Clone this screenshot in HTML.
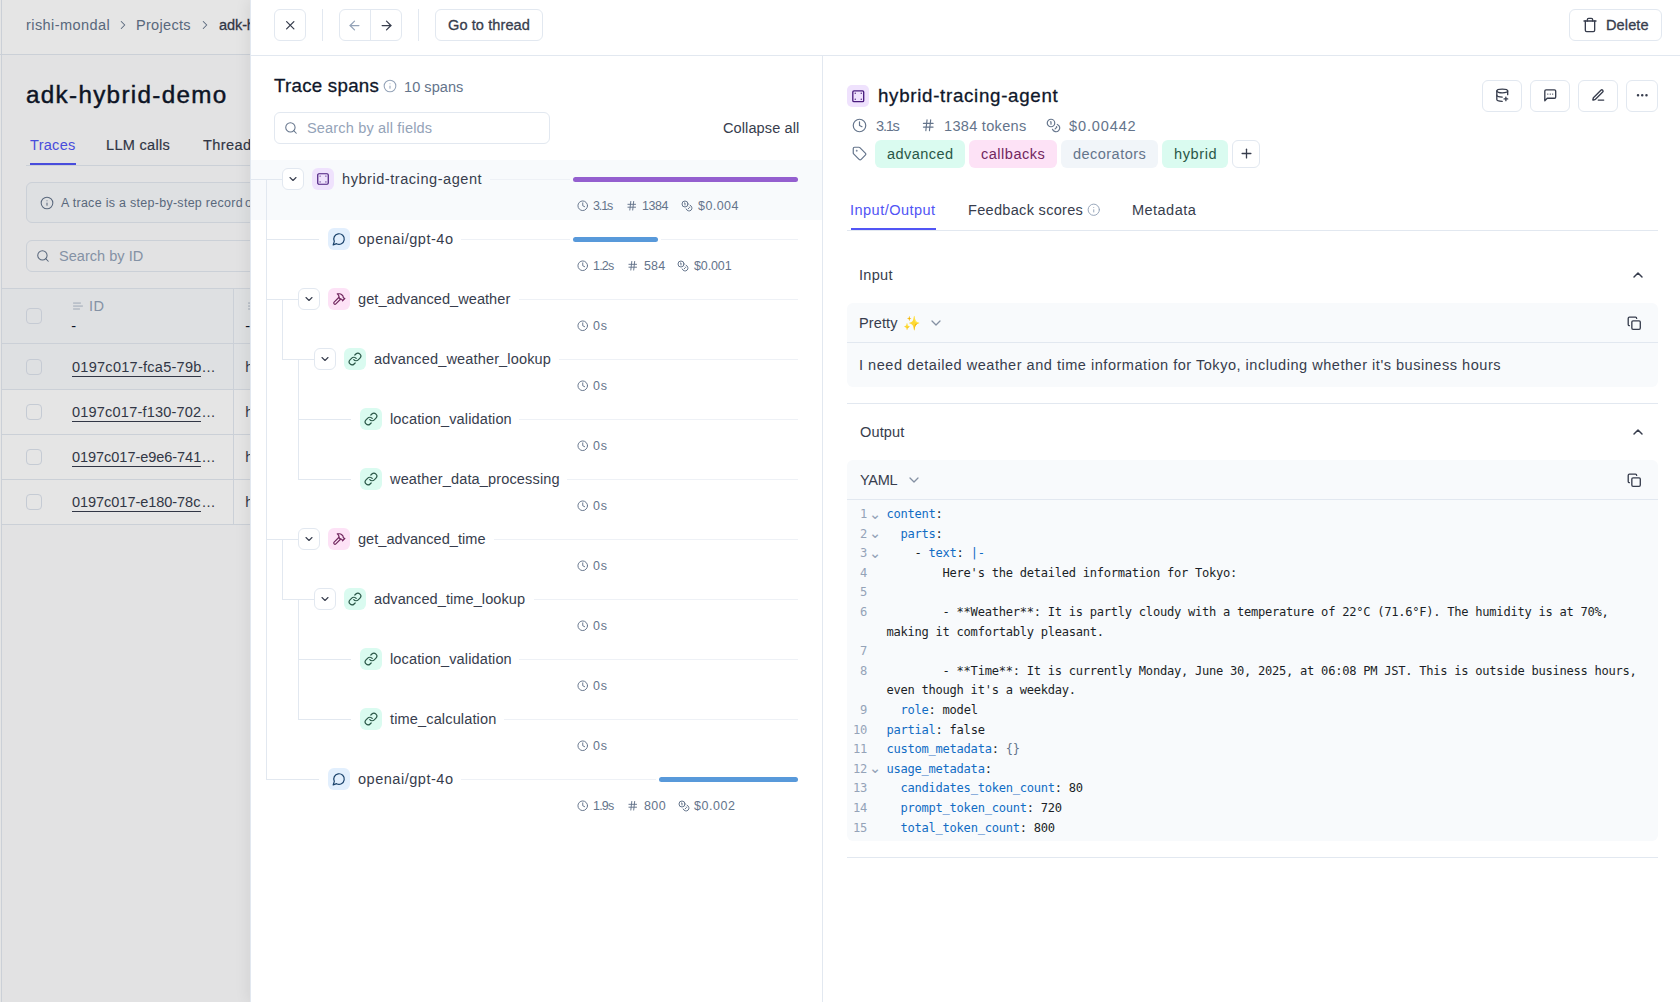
<!DOCTYPE html>
<html lang="en"><head><meta charset="utf-8"><title>adk-hybrid-demo - Trace spans</title>
<style>
html,body{margin:0;padding:0;}
body{width:1680px;height:1002px;overflow:hidden;position:relative;background:#fff;font-family:"Liberation Sans",sans-serif;-webkit-font-smoothing:antialiased;}
.b{position:absolute;}
.ic{position:absolute;display:block;}
.t{position:absolute;white-space:pre;display:block;}
.emoji{font-family:"Noto Color Emoji","DejaVu Sans",sans-serif;}
#page{position:absolute;left:0;top:0;width:250px;height:1002px;overflow:hidden;background:#fcfcfd;}
#overlay{position:absolute;left:0;top:0;width:250px;height:1002px;background:rgba(0,0,0,0.1);}
#panel{position:absolute;left:250px;top:0;width:1430px;height:1002px;background:#fff;border-left:1px solid #e2e8f0;box-sizing:border-box;box-shadow:-2px 0 14px rgba(0,0,0,0.07);}
#code{position:absolute;left:847px;top:0;width:811px;height:0;font-family:"DejaVu Sans Mono","Liberation Mono",monospace;font-size:12.1px;letter-spacing:-0.271px;color:#1b1f27;}
.cl{position:absolute;left:0;height:19.6px;line-height:19.6px;white-space:pre;width:811px;}
.ln{position:absolute;left:0;width:20px;text-align:right;color:#94a3b8;}
.fold{position:absolute;left:22px;color:#94a3b8;font-family:"DejaVu Sans",sans-serif;font-size:14.5px;top:-0.5px;letter-spacing:0;}
.cc{position:absolute;left:39.5px;}
</style></head>
<body>
<div id="page">
<div class="b" style="left:0px;top:0px;width:260px;height:54px;background:#fff;"></div>
<div class="b" style="left:0px;top:0px;width:1px;height:1002px;background:#fff;border-right:1px solid #e2e8f0;"></div>
<div class="b" style="left:0px;top:54px;width:260px;height:1px;background:#e2e8f0;"></div>
<span id="t1" class="t " style="left:26.00px;top:17px;font-size:14.56px;line-height:16px;color:#64748b;letter-spacing:0.409px;">rishi-mondal</span>
<svg class="ic" style="left:116px;top:18px;color:#64748b" width="14" height="14" viewBox="0 0 24 24" fill="none" stroke="currentColor" stroke-width="1.8" stroke-linecap="round" stroke-linejoin="round"><path d="m9 18 6-6-6-6"/></svg>
<span id="t2" class="t " style="left:136.00px;top:17px;font-size:14.56px;line-height:16px;color:#64748b;letter-spacing:0.286px;">Projects</span>
<svg class="ic" style="left:198px;top:18px;color:#64748b" width="14" height="14" viewBox="0 0 24 24" fill="none" stroke="currentColor" stroke-width="1.8" stroke-linecap="round" stroke-linejoin="round"><path d="m9 18 6-6-6-6"/></svg>
<span id="t3" class="t " style="left:219.00px;top:17px;font-size:14.56px;line-height:16px;-webkit-text-stroke:0.3px currentColor;color:#373d4d;letter-spacing:-0.107px;">adk-hybrid-demo</span>
<span id="t4" class="t " style="left:26.00px;top:81px;font-size:24.23px;line-height:27px;-webkit-text-stroke:0.3px currentColor;color:#0f172a;letter-spacing:1.321px;-webkit-text-stroke:0.45px currentColor;">adk-hybrid-demo</span>
<span id="t5" class="t " style="left:30.00px;top:137px;font-size:14.56px;line-height:16px;color:#5155f5;letter-spacing:0.280px;">Traces</span>
<span id="t6" class="t " style="left:106.00px;top:137px;font-size:14.56px;line-height:16px;color:#373d4d;letter-spacing:0.300px;-webkit-text-stroke:0.18px currentColor;">LLM calls</span>
<span id="t7" class="t " style="left:203.00px;top:137px;font-size:14.56px;line-height:16px;color:#373d4d;letter-spacing:0.417px;-webkit-text-stroke:0.18px currentColor;">Threads</span>
<div class="b" style="left:26px;top:165px;width:240px;height:1px;background:#e2e8f0;"></div>
<div class="b" style="left:30px;top:163px;width:46px;height:2px;background:#5155f5;"></div>
<div class="b" style="left:26px;top:182px;width:300px;height:41px;border:1px solid #e2e8f0;border-radius:6px;background:#f8fafc;box-sizing:border-box;"></div>
<svg class="ic" style="left:39.5px;top:196px;color:#64748b" width="14" height="14" viewBox="0 0 24 24" fill="none" stroke="currentColor" stroke-width="1.8" stroke-linecap="round" stroke-linejoin="round"><circle cx="12" cy="12" r="10"/><path d="M12 16v-4"/><path d="M12 8h.01"/></svg>
<span id="t8" class="t " style="left:61.00px;top:196px;font-size:12.48px;line-height:14px;color:#64748b;letter-spacing:0.294px;">A trace is a step-by-step record</span>
<span id="t9" class="t " style="left:244.98px;top:196px;font-size:12.48px;line-height:14px;color:#64748b;">of your LLM application</span>
<div class="b" style="left:26px;top:240px;width:300px;height:32px;border:1px solid #e2e8f0;border-radius:6px;box-sizing:border-box;"></div>
<svg class="ic" style="left:36px;top:249px;color:#64748b" width="14" height="14" viewBox="0 0 24 24" fill="none" stroke="currentColor" stroke-width="1.8" stroke-linecap="round" stroke-linejoin="round"><circle cx="11" cy="11" r="8"/><path d="m21 21-4.3-4.3"/></svg>
<span id="t10" class="t " style="left:59.00px;top:248px;font-size:14.56px;line-height:16px;color:#94a3b8;letter-spacing:0.018px;">Search by ID</span>
<div class="b" style="left:2px;top:288px;width:260px;height:56px;background:#f8fafc;border-top:1px solid #e2e8f0;border-bottom:1px solid #e2e8f0;box-sizing:border-box;"></div>
<div class="b" style="left:2px;top:344px;width:260px;height:45px;background:#f8fafc;"></div>
<div class="b" style="left:2px;top:390px;width:260px;height:134px;background:#fff;"></div>
<div class="b" style="left:2px;top:389px;width:260px;height:1px;background:#e2e8f0;"></div>
<div class="b" style="left:2px;top:434px;width:260px;height:1px;background:#e2e8f0;"></div>
<div class="b" style="left:2px;top:479px;width:260px;height:1px;background:#e2e8f0;"></div>
<div class="b" style="left:2px;top:524px;width:260px;height:1px;background:#e2e8f0;"></div>
<div class="b" style="left:233px;top:289px;width:1px;height:235px;background:#e2e8f0;"></div>
<div class="b" style="left:26px;top:308px;width:16px;height:16px;border:1px solid #dce2ec;border-radius:4px;box-sizing:border-box;"></div>
<svg class="ic" style="left:72px;top:300px;color:#a9b5c6" width="12" height="12" viewBox="0 0 24 24" fill="none" stroke="currentColor" stroke-width="1.8" stroke-linecap="round" stroke-linejoin="round"><path d="M17 6.100H3"/><path d="M21 12.100H3"/><path d="M15.100 18H3"/></svg>
<span id="t11" class="t " style="left:89.00px;top:298px;font-size:14.56px;line-height:16px;color:#94a3b8;letter-spacing:0.500px;">ID</span>
<span id="t12" class="t " style="left:71.27px;top:318px;font-size:14.56px;line-height:16px;color:#0f172a;">-</span>
<svg class="ic" style="left:247px;top:300px;color:#a9b5c6" width="12" height="12" viewBox="0 0 24 24" fill="none" stroke="currentColor" stroke-width="1.8" stroke-linecap="round" stroke-linejoin="round"><path d="M17 6.100H3"/><path d="M21 12.100H3"/><path d="M15.100 18H3"/></svg>
<span id="t13" class="t " style="left:245.27px;top:318px;font-size:14.56px;line-height:16px;color:#0f172a;">-</span>
<div class="b" style="left:26px;top:359px;width:16px;height:16px;border:1px solid #dce2ec;border-radius:4px;box-sizing:border-box;"></div>
<span id="t14" class="t " style="left:72.00px;top:359px;font-size:14.56px;line-height:16px;color:#373d4d;letter-spacing:0.250px;">0197c017-fca5-79b</span>
<div class="b" style="left:72px;top:376px;width:128.6px;height:1px;background:#373d4d;"></div>
<span id="t15" class="t " style="left:202.00px;top:359px;font-size:14.56px;line-height:16px;color:#373d4d;letter-spacing:0.500px;">...</span>
<span id="t16" class="t " style="left:245.27px;top:359px;font-size:14.56px;line-height:16px;color:#373d4d;">hybrid-tracing-agent</span>
<div class="b" style="left:26px;top:404px;width:16px;height:16px;border:1px solid #dce2ec;border-radius:4px;box-sizing:border-box;"></div>
<span id="t17" class="t " style="left:72.00px;top:404px;font-size:14.56px;line-height:16px;color:#373d4d;letter-spacing:0.188px;">0197c017-f130-702</span>
<div class="b" style="left:72px;top:421px;width:128.6px;height:1px;background:#373d4d;"></div>
<span id="t18" class="t " style="left:202.00px;top:404px;font-size:14.56px;line-height:16px;color:#373d4d;letter-spacing:0.500px;">...</span>
<span id="t19" class="t " style="left:245.27px;top:404px;font-size:14.56px;line-height:16px;color:#373d4d;">hybrid-tracing-agent</span>
<div class="b" style="left:26px;top:449px;width:16px;height:16px;border:1px solid #dce2ec;border-radius:4px;box-sizing:border-box;"></div>
<span id="t20" class="t " style="left:72.00px;top:449px;font-size:14.56px;line-height:16px;color:#373d4d;letter-spacing:-0.062px;">0197c017-e9e6-741</span>
<div class="b" style="left:72px;top:466px;width:128.6px;height:1px;background:#373d4d;"></div>
<span id="t21" class="t " style="left:202.00px;top:449px;font-size:14.56px;line-height:16px;color:#373d4d;letter-spacing:0.500px;">...</span>
<span id="t22" class="t " style="left:245.27px;top:449px;font-size:14.56px;line-height:16px;color:#373d4d;">hybrid-tracing-agent</span>
<div class="b" style="left:26px;top:494px;width:16px;height:16px;border:1px solid #dce2ec;border-radius:4px;box-sizing:border-box;"></div>
<span id="t23" class="t " style="left:72.00px;top:494px;font-size:14.56px;line-height:16px;color:#373d4d;letter-spacing:-0.062px;">0197c017-e180-78c</span>
<div class="b" style="left:72px;top:511px;width:128.6px;height:1px;background:#373d4d;"></div>
<span id="t24" class="t " style="left:202.00px;top:494px;font-size:14.56px;line-height:16px;color:#373d4d;letter-spacing:0.500px;">...</span>
<span id="t25" class="t " style="left:245.27px;top:494px;font-size:14.56px;line-height:16px;color:#373d4d;">hybrid-tracing-agent</span>
</div>
<div id="overlay"></div>
<div id="panel">
</div>
<div class="b" style="left:251px;top:55px;width:1429px;height:1px;background:#e2e8f0;"></div>
<div class="b" style="left:274px;top:9px;width:32px;height:32px;border:1px solid #e2e8f0;border-radius:6px;box-sizing:border-box;background:#fff;"></div>
<svg class="ic" style="left:282.75px;top:17.75px;color:#373d4d" width="14.5" height="14.5" viewBox="0 0 24 24" fill="none" stroke="currentColor" stroke-width="2.1" stroke-linecap="round" stroke-linejoin="round"><path d="M18 6 6 18"/><path d="m6 6 12 12"/></svg>
<div class="b" style="left:322px;top:9px;width:1px;height:32px;background:#e2e8f0;"></div>
<div class="b" style="left:339px;top:9px;width:63px;height:32px;border:1px solid #e2e8f0;border-radius:6px;box-sizing:border-box;background:#fff;"></div>
<div class="b" style="left:370px;top:9px;width:1px;height:32px;background:#e2e8f0;"></div>
<svg class="ic" style="left:347px;top:17.5px;color:#94a3b8" width="15" height="15" viewBox="0 0 24 24" fill="none" stroke="currentColor" stroke-width="2" stroke-linecap="round" stroke-linejoin="round"><path d="m12 19-7-7 7-7"/><path d="M19 12H5"/></svg>
<svg class="ic" style="left:378.5px;top:17.5px;color:#373d4d" width="15" height="15" viewBox="0 0 24 24" fill="none" stroke="currentColor" stroke-width="2" stroke-linecap="round" stroke-linejoin="round"><path d="M5 12h14"/><path d="m12 5 7 7-7 7"/></svg>
<div class="b" style="left:418px;top:9px;width:1px;height:32px;background:#e2e8f0;"></div>
<div class="b" style="left:435px;top:9px;width:108px;height:32px;border:1px solid #e2e8f0;border-radius:6px;box-sizing:border-box;background:#fff;"></div>
<span id="t26" class="t " style="left:448.00px;top:17px;font-size:14.56px;line-height:16px;-webkit-text-stroke:0.3px currentColor;color:#373d4d;letter-spacing:0.091px;">Go to thread</span>
<div class="b" style="left:1569px;top:9px;width:93px;height:32px;border:1px solid #e2e8f0;border-radius:6px;box-sizing:border-box;background:#fff;"></div>
<svg class="ic" style="left:1582px;top:17px;color:#373d4d" width="16" height="16" viewBox="0 0 24 24" fill="none" stroke="currentColor" stroke-width="2" stroke-linecap="round" stroke-linejoin="round"><path d="M3 6h18"/><path d="M19 6v14c0 1-1 2-2 2H7c-1 0-2-1-2-2V6"/><path d="M8 6V4c0-1 1-2 2-2h4c1 0 2 1 2 2v2"/></svg>
<span id="t27" class="t " style="left:1606.00px;top:17px;font-size:14.56px;line-height:16px;-webkit-text-stroke:0.3px currentColor;color:#373d4d;letter-spacing:0.100px;">Delete</span>
<div class="b" style="left:822px;top:56px;width:1px;height:946px;background:#e2e8f0;"></div>
<span id="t28" class="t " style="left:274.00px;top:75px;font-size:18.72px;line-height:21px;-webkit-text-stroke:0.3px currentColor;color:#0f172a;letter-spacing:0.260px;">Trace spans</span>
<svg class="ic" style="left:383px;top:79.3px;color:#94a3b8" width="14" height="14" viewBox="0 0 24 24" fill="none" stroke="currentColor" stroke-width="1.8" stroke-linecap="round" stroke-linejoin="round"><circle cx="12" cy="12" r="10"/><path d="M12 16v-4"/><path d="M12 8h.01"/></svg>
<span id="t29" class="t " style="left:404.00px;top:79px;font-size:14.56px;line-height:16px;color:#64748b;letter-spacing:0.043px;">10 spans</span>
<div class="b" style="left:274px;top:112px;width:276px;height:32px;border:1px solid #e2e8f0;border-radius:6px;box-sizing:border-box;background:#fff;"></div>
<svg class="ic" style="left:284px;top:121px;color:#64748b" width="14" height="14" viewBox="0 0 24 24" fill="none" stroke="currentColor" stroke-width="1.8" stroke-linecap="round" stroke-linejoin="round"><circle cx="11" cy="11" r="8"/><path d="m21 21-4.3-4.3"/></svg>
<span id="t30" class="t " style="left:307.00px;top:120px;font-size:14.56px;line-height:16px;color:#94a3b8;letter-spacing:0.158px;">Search by all fields</span>
<span id="t31" class="t " style="left:723.00px;top:120px;font-size:14.56px;line-height:16px;color:#373d4d;letter-spacing:0.091px;">Collapse all</span>
<div class="b" style="left:251px;top:160px;width:571px;height:60px;background:#f8fafc;"></div>
<div class="b" style="left:266px;top:179px;width:1px;height:601px;background:#e2e8f0;"></div>
<div class="b" style="left:282px;top:299px;width:1px;height:61px;background:#e2e8f0;"></div>
<div class="b" style="left:282px;top:539px;width:1px;height:61px;background:#e2e8f0;"></div>
<div class="b" style="left:298px;top:359px;width:1px;height:121px;background:#e2e8f0;"></div>
<div class="b" style="left:298px;top:599px;width:1px;height:121px;background:#e2e8f0;"></div>
<div class="b" style="left:251px;top:179px;width:31px;height:1px;background:#e2e8f0;"></div>
<div class="b" style="left:282px;top:168px;width:22px;height:22px;border:1px solid #e2e8f0;border-radius:6px;box-sizing:border-box;background:#fff;"></div>
<svg class="ic" style="left:287px;top:173.1px;color:#373d4d" width="12" height="12" viewBox="0 0 24 24" fill="none" stroke="currentColor" stroke-width="2.15" stroke-linecap="round" stroke-linejoin="round"><path d="m6 9 6 6 6-6"/></svg>
<div class="b" style="left:312px;top:168px;width:22px;height:22px;background:#efe2fd;border-radius:6px;"></div>
<svg class="ic" style="left:316px;top:172px;color:#491b7e" width="14" height="14" viewBox="0 0 24 24" fill="none" stroke="currentColor" stroke-width="2.05" stroke-linecap="round" stroke-linejoin="round"><rect width="18" height="18" x="3" y="3" rx="2"/><path d="M7 7h.01"/><path d="M17 7h.01"/><path d="M7 17h.01"/><path d="M17 17h.01"/></svg>
<span id="t32" class="t " style="left:342.00px;top:171px;font-size:14.56px;line-height:16px;color:#373d4d;letter-spacing:0.537px;">hybrid-tracing-agent</span>
<div class="b" style="left:490.2px;top:179px;width:307.8px;height:1px;background:#eef1f6;"></div>
<div class="b" style="left:570px;top:177px;width:231px;height:5px;background:#f8fafc;"></div>
<div class="b" style="left:573px;top:177px;width:225px;height:5px;background:#945fcf;border-radius:3px;"></div>
<svg class="ic" style="left:576.95px;top:200.25px;color:#64748b" width="11.5" height="11.5" viewBox="0 0 24 24" fill="none" stroke="currentColor" stroke-width="2" stroke-linecap="round" stroke-linejoin="round"><circle cx="12" cy="12" r="10"/><polyline points="12 6 12 12 16 14"/></svg>
<span id="t33" class="t " style="left:593.00px;top:199px;font-size:12.48px;line-height:14px;color:#64748b;letter-spacing:-1.133px;">3.1s</span>
<svg class="ic" style="left:626.25px;top:200.25px;color:#64748b" width="11.5" height="11.5" viewBox="0 0 24 24" fill="none" stroke="currentColor" stroke-width="2" stroke-linecap="round" stroke-linejoin="round"><line x1="4" x2="20" y1="9" y2="9"/><line x1="4" x2="20" y1="15" y2="15"/><line x1="10" x2="8" y1="3" y2="21"/><line x1="16" x2="14" y1="3" y2="21"/></svg>
<span id="t34" class="t " style="left:642.00px;top:199px;font-size:12.48px;line-height:14px;color:#64748b;letter-spacing:-0.400px;">1384</span>
<svg class="ic" style="left:681px;top:200px;color:#64748b" width="12" height="12" viewBox="0 0 24 24" fill="none" stroke="currentColor" stroke-width="2" stroke-linecap="round" stroke-linejoin="round"><circle cx="8" cy="8" r="6"/><path d="M18.09 10.37A6 6 0 1 1 10.34 18"/><path d="M7 6h1v4"/><path d="m16.71 13.88.7.71-2.82 2.82"/></svg>
<span id="t35" class="t " style="left:698.00px;top:199px;font-size:12.48px;line-height:14px;color:#64748b;letter-spacing:0.460px;">$0.004</span>
<div class="b" style="left:266px;top:239px;width:53px;height:1px;background:#e2e8f0;"></div>
<div class="b" style="left:328px;top:228px;width:22px;height:22px;background:#e2effd;border-radius:6px;"></div>
<svg class="ic" style="left:332px;top:232px;color:#19426b" width="14" height="14" viewBox="0 0 24 24" fill="none" stroke="currentColor" stroke-width="2.05" stroke-linecap="round" stroke-linejoin="round"><path d="M7.9 20A9 9 0 1 0 4 16.1L2 22Z"/></svg>
<span id="t36" class="t " style="left:358.00px;top:231px;font-size:14.56px;line-height:16px;color:#373d4d;letter-spacing:0.500px;">openai/gpt-4o</span>
<div class="b" style="left:461px;top:239px;width:337px;height:1px;background:#eef1f6;"></div>
<div class="b" style="left:570px;top:237px;width:91px;height:5px;background:#fff;"></div>
<div class="b" style="left:573px;top:237px;width:85px;height:5px;background:#5899da;border-radius:3px;"></div>
<svg class="ic" style="left:576.95px;top:260.25px;color:#64748b" width="11.5" height="11.5" viewBox="0 0 24 24" fill="none" stroke="currentColor" stroke-width="2" stroke-linecap="round" stroke-linejoin="round"><circle cx="12" cy="12" r="10"/><polyline points="12 6 12 12 16 14"/></svg>
<span id="t37" class="t " style="left:593.00px;top:259px;font-size:12.48px;line-height:14px;color:#64748b;letter-spacing:-0.767px;">1.2s</span>
<svg class="ic" style="left:627.25px;top:260.25px;color:#64748b" width="11.5" height="11.5" viewBox="0 0 24 24" fill="none" stroke="currentColor" stroke-width="2" stroke-linecap="round" stroke-linejoin="round"><line x1="4" x2="20" y1="9" y2="9"/><line x1="4" x2="20" y1="15" y2="15"/><line x1="10" x2="8" y1="3" y2="21"/><line x1="16" x2="14" y1="3" y2="21"/></svg>
<span id="t38" class="t " style="left:644.00px;top:259px;font-size:12.48px;line-height:14px;color:#64748b;letter-spacing:0.150px;">584</span>
<svg class="ic" style="left:676.9px;top:260px;color:#64748b" width="12" height="12" viewBox="0 0 24 24" fill="none" stroke="currentColor" stroke-width="2" stroke-linecap="round" stroke-linejoin="round"><circle cx="8" cy="8" r="6"/><path d="M18.09 10.37A6 6 0 1 1 10.34 18"/><path d="M7 6h1v4"/><path d="m16.71 13.88.7.71-2.82 2.82"/></svg>
<span id="t39" class="t " style="left:694.00px;top:259px;font-size:12.48px;line-height:14px;color:#64748b;letter-spacing:-0.100px;">$0.001</span>
<div class="b" style="left:266px;top:299px;width:32px;height:1px;background:#e2e8f0;"></div>
<div class="b" style="left:298px;top:288px;width:22px;height:22px;border:1px solid #e2e8f0;border-radius:6px;box-sizing:border-box;background:#fff;"></div>
<svg class="ic" style="left:303px;top:293.1px;color:#373d4d" width="12" height="12" viewBox="0 0 24 24" fill="none" stroke="currentColor" stroke-width="2.15" stroke-linecap="round" stroke-linejoin="round"><path d="m6 9 6 6 6-6"/></svg>
<div class="b" style="left:328px;top:288px;width:22px;height:22px;background:#fde2f6;border-radius:6px;"></div>
<svg class="ic" style="left:332px;top:292px;color:#72275f" width="14" height="14" viewBox="0 0 24 24" fill="none" stroke="currentColor" stroke-width="2.05" stroke-linecap="round" stroke-linejoin="round"><path d="m15 12-8.373 8.373a1 1 0 1 1-3-3L12 9"/><path d="m18 15 4-4"/><path d="m21.5 11.5-1.914-1.914A2 2 0 0 1 19 8.172V7l-2.26-2.26a6 6 0 0 0-4.202-1.756L9 2.96l.92.82A6.18 6.18 0 0 1 12 8.4V10l2 2h1.172a2 2 0 0 1 1.414.586L18.5 14.5"/></svg>
<span id="t40" class="t " style="left:358.00px;top:291px;font-size:14.56px;line-height:16px;color:#373d4d;letter-spacing:0.053px;">get_advanced_weather</span>
<div class="b" style="left:519px;top:299px;width:279px;height:1px;background:#eef1f6;"></div>
<svg class="ic" style="left:576.95px;top:320.25px;color:#64748b" width="11.5" height="11.5" viewBox="0 0 24 24" fill="none" stroke="currentColor" stroke-width="2" stroke-linecap="round" stroke-linejoin="round"><circle cx="12" cy="12" r="10"/><polyline points="12 6 12 12 16 14"/></svg>
<span id="t41" class="t " style="left:593.00px;top:319px;font-size:12.48px;line-height:14px;color:#64748b;letter-spacing:0.700px;">0s</span>
<div class="b" style="left:282px;top:359px;width:32px;height:1px;background:#e2e8f0;"></div>
<div class="b" style="left:314px;top:348px;width:22px;height:22px;border:1px solid #e2e8f0;border-radius:6px;box-sizing:border-box;background:#fff;"></div>
<svg class="ic" style="left:319px;top:353.1px;color:#373d4d" width="12" height="12" viewBox="0 0 24 24" fill="none" stroke="currentColor" stroke-width="2.15" stroke-linecap="round" stroke-linejoin="round"><path d="m6 9 6 6 6-6"/></svg>
<div class="b" style="left:344px;top:348px;width:22px;height:22px;background:#dafbf0;border-radius:6px;"></div>
<svg class="ic" style="left:348px;top:352px;color:#295747" width="14" height="14" viewBox="0 0 24 24" fill="none" stroke="currentColor" stroke-width="2.05" stroke-linecap="round" stroke-linejoin="round"><path d="M10 13a5 5 0 0 0 7.54.54l3-3a5 5 0 0 0-7.07-7.07l-1.72 1.71"/><path d="M14 11a5 5 0 0 0-7.54-.54l-3 3a5 5 0 0 0 7.07 7.07l1.71-1.71"/></svg>
<span id="t42" class="t " style="left:374.00px;top:351px;font-size:14.56px;line-height:16px;color:#373d4d;letter-spacing:0.136px;">advanced_weather_lookup</span>
<div class="b" style="left:559px;top:359px;width:239px;height:1px;background:#eef1f6;"></div>
<svg class="ic" style="left:576.95px;top:380.25px;color:#64748b" width="11.5" height="11.5" viewBox="0 0 24 24" fill="none" stroke="currentColor" stroke-width="2" stroke-linecap="round" stroke-linejoin="round"><circle cx="12" cy="12" r="10"/><polyline points="12 6 12 12 16 14"/></svg>
<span id="t43" class="t " style="left:593.00px;top:379px;font-size:12.48px;line-height:14px;color:#64748b;letter-spacing:0.700px;">0s</span>
<div class="b" style="left:298px;top:419px;width:53px;height:1px;background:#e2e8f0;"></div>
<div class="b" style="left:360px;top:408px;width:22px;height:22px;background:#dafbf0;border-radius:6px;"></div>
<svg class="ic" style="left:364px;top:412px;color:#295747" width="14" height="14" viewBox="0 0 24 24" fill="none" stroke="currentColor" stroke-width="2.05" stroke-linecap="round" stroke-linejoin="round"><path d="M10 13a5 5 0 0 0 7.54.54l3-3a5 5 0 0 0-7.07-7.07l-1.72 1.71"/><path d="M14 11a5 5 0 0 0-7.54-.54l-3 3a5 5 0 0 0 7.07 7.07l1.71-1.71"/></svg>
<span id="t44" class="t " style="left:390.00px;top:411px;font-size:14.56px;line-height:16px;color:#373d4d;letter-spacing:0.111px;">location_validation</span>
<div class="b" style="left:519px;top:419px;width:279px;height:1px;background:#eef1f6;"></div>
<svg class="ic" style="left:576.95px;top:440.25px;color:#64748b" width="11.5" height="11.5" viewBox="0 0 24 24" fill="none" stroke="currentColor" stroke-width="2" stroke-linecap="round" stroke-linejoin="round"><circle cx="12" cy="12" r="10"/><polyline points="12 6 12 12 16 14"/></svg>
<span id="t45" class="t " style="left:593.00px;top:439px;font-size:12.48px;line-height:14px;color:#64748b;letter-spacing:0.700px;">0s</span>
<div class="b" style="left:298px;top:479px;width:53px;height:1px;background:#e2e8f0;"></div>
<div class="b" style="left:360px;top:468px;width:22px;height:22px;background:#dafbf0;border-radius:6px;"></div>
<svg class="ic" style="left:364px;top:472px;color:#295747" width="14" height="14" viewBox="0 0 24 24" fill="none" stroke="currentColor" stroke-width="2.05" stroke-linecap="round" stroke-linejoin="round"><path d="M10 13a5 5 0 0 0 7.54.54l3-3a5 5 0 0 0-7.07-7.07l-1.72 1.71"/><path d="M14 11a5 5 0 0 0-7.54-.54l-3 3a5 5 0 0 0 7.07 7.07l1.71-1.71"/></svg>
<span id="t46" class="t " style="left:390.00px;top:471px;font-size:14.56px;line-height:16px;color:#373d4d;letter-spacing:0.136px;">weather_data_processing</span>
<div class="b" style="left:567px;top:479px;width:231px;height:1px;background:#eef1f6;"></div>
<svg class="ic" style="left:576.95px;top:500.25px;color:#64748b" width="11.5" height="11.5" viewBox="0 0 24 24" fill="none" stroke="currentColor" stroke-width="2" stroke-linecap="round" stroke-linejoin="round"><circle cx="12" cy="12" r="10"/><polyline points="12 6 12 12 16 14"/></svg>
<span id="t47" class="t " style="left:593.00px;top:499px;font-size:12.48px;line-height:14px;color:#64748b;letter-spacing:0.700px;">0s</span>
<div class="b" style="left:266px;top:539px;width:32px;height:1px;background:#e2e8f0;"></div>
<div class="b" style="left:298px;top:528px;width:22px;height:22px;border:1px solid #e2e8f0;border-radius:6px;box-sizing:border-box;background:#fff;"></div>
<svg class="ic" style="left:303px;top:533.1px;color:#373d4d" width="12" height="12" viewBox="0 0 24 24" fill="none" stroke="currentColor" stroke-width="2.15" stroke-linecap="round" stroke-linejoin="round"><path d="m6 9 6 6 6-6"/></svg>
<div class="b" style="left:328px;top:528px;width:22px;height:22px;background:#fde2f6;border-radius:6px;"></div>
<svg class="ic" style="left:332px;top:532px;color:#72275f" width="14" height="14" viewBox="0 0 24 24" fill="none" stroke="currentColor" stroke-width="2.05" stroke-linecap="round" stroke-linejoin="round"><path d="m15 12-8.373 8.373a1 1 0 1 1-3-3L12 9"/><path d="m18 15 4-4"/><path d="m21.5 11.5-1.914-1.914A2 2 0 0 1 19 8.172V7l-2.26-2.26a6 6 0 0 0-4.202-1.756L9 2.96l.92.82A6.18 6.18 0 0 1 12 8.4V10l2 2h1.172a2 2 0 0 1 1.414.586L18.5 14.5"/></svg>
<span id="t48" class="t " style="left:358.00px;top:531px;font-size:14.56px;line-height:16px;color:#373d4d;letter-spacing:0.031px;">get_advanced_time</span>
<div class="b" style="left:493.5px;top:539px;width:304.5px;height:1px;background:#eef1f6;"></div>
<svg class="ic" style="left:576.95px;top:560.25px;color:#64748b" width="11.5" height="11.5" viewBox="0 0 24 24" fill="none" stroke="currentColor" stroke-width="2" stroke-linecap="round" stroke-linejoin="round"><circle cx="12" cy="12" r="10"/><polyline points="12 6 12 12 16 14"/></svg>
<span id="t49" class="t " style="left:593.00px;top:559px;font-size:12.48px;line-height:14px;color:#64748b;letter-spacing:0.700px;">0s</span>
<div class="b" style="left:282px;top:599px;width:32px;height:1px;background:#e2e8f0;"></div>
<div class="b" style="left:314px;top:588px;width:22px;height:22px;border:1px solid #e2e8f0;border-radius:6px;box-sizing:border-box;background:#fff;"></div>
<svg class="ic" style="left:319px;top:593.1px;color:#373d4d" width="12" height="12" viewBox="0 0 24 24" fill="none" stroke="currentColor" stroke-width="2.15" stroke-linecap="round" stroke-linejoin="round"><path d="m6 9 6 6 6-6"/></svg>
<div class="b" style="left:344px;top:588px;width:22px;height:22px;background:#dafbf0;border-radius:6px;"></div>
<svg class="ic" style="left:348px;top:592px;color:#295747" width="14" height="14" viewBox="0 0 24 24" fill="none" stroke="currentColor" stroke-width="2.05" stroke-linecap="round" stroke-linejoin="round"><path d="M10 13a5 5 0 0 0 7.54.54l3-3a5 5 0 0 0-7.07-7.07l-1.72 1.71"/><path d="M14 11a5 5 0 0 0-7.54-.54l-3 3a5 5 0 0 0 7.07 7.07l1.71-1.71"/></svg>
<span id="t50" class="t " style="left:374.00px;top:591px;font-size:14.56px;line-height:16px;color:#373d4d;letter-spacing:0.079px;">advanced_time_lookup</span>
<div class="b" style="left:533.5px;top:599px;width:264.5px;height:1px;background:#eef1f6;"></div>
<svg class="ic" style="left:576.95px;top:620.25px;color:#64748b" width="11.5" height="11.5" viewBox="0 0 24 24" fill="none" stroke="currentColor" stroke-width="2" stroke-linecap="round" stroke-linejoin="round"><circle cx="12" cy="12" r="10"/><polyline points="12 6 12 12 16 14"/></svg>
<span id="t51" class="t " style="left:593.00px;top:619px;font-size:12.48px;line-height:14px;color:#64748b;letter-spacing:0.700px;">0s</span>
<div class="b" style="left:298px;top:659px;width:53px;height:1px;background:#e2e8f0;"></div>
<div class="b" style="left:360px;top:648px;width:22px;height:22px;background:#dafbf0;border-radius:6px;"></div>
<svg class="ic" style="left:364px;top:652px;color:#295747" width="14" height="14" viewBox="0 0 24 24" fill="none" stroke="currentColor" stroke-width="2.05" stroke-linecap="round" stroke-linejoin="round"><path d="M10 13a5 5 0 0 0 7.54.54l3-3a5 5 0 0 0-7.07-7.07l-1.72 1.71"/><path d="M14 11a5 5 0 0 0-7.54-.54l-3 3a5 5 0 0 0 7.07 7.07l1.71-1.71"/></svg>
<span id="t52" class="t " style="left:390.00px;top:651px;font-size:14.56px;line-height:16px;color:#373d4d;letter-spacing:0.111px;">location_validation</span>
<div class="b" style="left:519px;top:659px;width:279px;height:1px;background:#eef1f6;"></div>
<svg class="ic" style="left:576.95px;top:680.25px;color:#64748b" width="11.5" height="11.5" viewBox="0 0 24 24" fill="none" stroke="currentColor" stroke-width="2" stroke-linecap="round" stroke-linejoin="round"><circle cx="12" cy="12" r="10"/><polyline points="12 6 12 12 16 14"/></svg>
<span id="t53" class="t " style="left:593.00px;top:679px;font-size:12.48px;line-height:14px;color:#64748b;letter-spacing:0.700px;">0s</span>
<div class="b" style="left:298px;top:719px;width:53px;height:1px;background:#e2e8f0;"></div>
<div class="b" style="left:360px;top:708px;width:22px;height:22px;background:#dafbf0;border-radius:6px;"></div>
<svg class="ic" style="left:364px;top:712px;color:#295747" width="14" height="14" viewBox="0 0 24 24" fill="none" stroke="currentColor" stroke-width="2.05" stroke-linecap="round" stroke-linejoin="round"><path d="M10 13a5 5 0 0 0 7.54.54l3-3a5 5 0 0 0-7.07-7.07l-1.72 1.71"/><path d="M14 11a5 5 0 0 0-7.54-.54l-3 3a5 5 0 0 0 7.07 7.07l1.71-1.71"/></svg>
<span id="t54" class="t " style="left:390.00px;top:711px;font-size:14.56px;line-height:16px;color:#373d4d;letter-spacing:0.133px;">time_calculation</span>
<div class="b" style="left:504px;top:719px;width:294px;height:1px;background:#eef1f6;"></div>
<svg class="ic" style="left:576.95px;top:740.25px;color:#64748b" width="11.5" height="11.5" viewBox="0 0 24 24" fill="none" stroke="currentColor" stroke-width="2" stroke-linecap="round" stroke-linejoin="round"><circle cx="12" cy="12" r="10"/><polyline points="12 6 12 12 16 14"/></svg>
<span id="t55" class="t " style="left:593.00px;top:739px;font-size:12.48px;line-height:14px;color:#64748b;letter-spacing:0.700px;">0s</span>
<div class="b" style="left:266px;top:779px;width:53px;height:1px;background:#e2e8f0;"></div>
<div class="b" style="left:328px;top:768px;width:22px;height:22px;background:#e2effd;border-radius:6px;"></div>
<svg class="ic" style="left:332px;top:772px;color:#19426b" width="14" height="14" viewBox="0 0 24 24" fill="none" stroke="currentColor" stroke-width="2.05" stroke-linecap="round" stroke-linejoin="round"><path d="M7.9 20A9 9 0 1 0 4 16.1L2 22Z"/></svg>
<span id="t56" class="t " style="left:358.00px;top:771px;font-size:14.56px;line-height:16px;color:#373d4d;letter-spacing:0.500px;">openai/gpt-4o</span>
<div class="b" style="left:461px;top:779px;width:337px;height:1px;background:#eef1f6;"></div>
<div class="b" style="left:656px;top:777px;width:145px;height:5px;background:#fff;"></div>
<div class="b" style="left:659px;top:777px;width:139px;height:5px;background:#5899da;border-radius:3px;"></div>
<svg class="ic" style="left:576.95px;top:800.25px;color:#64748b" width="11.5" height="11.5" viewBox="0 0 24 24" fill="none" stroke="currentColor" stroke-width="2" stroke-linecap="round" stroke-linejoin="round"><circle cx="12" cy="12" r="10"/><polyline points="12 6 12 12 16 14"/></svg>
<span id="t57" class="t " style="left:593.00px;top:799px;font-size:12.48px;line-height:14px;color:#64748b;letter-spacing:-0.767px;">1.9s</span>
<svg class="ic" style="left:627.25px;top:800.25px;color:#64748b" width="11.5" height="11.5" viewBox="0 0 24 24" fill="none" stroke="currentColor" stroke-width="2" stroke-linecap="round" stroke-linejoin="round"><line x1="4" x2="20" y1="9" y2="9"/><line x1="4" x2="20" y1="15" y2="15"/><line x1="10" x2="8" y1="3" y2="21"/><line x1="16" x2="14" y1="3" y2="21"/></svg>
<span id="t58" class="t " style="left:644.00px;top:799px;font-size:12.48px;line-height:14px;color:#64748b;letter-spacing:0.400px;">800</span>
<svg class="ic" style="left:677.8px;top:800px;color:#64748b" width="12" height="12" viewBox="0 0 24 24" fill="none" stroke="currentColor" stroke-width="2" stroke-linecap="round" stroke-linejoin="round"><circle cx="8" cy="8" r="6"/><path d="M18.09 10.37A6 6 0 1 1 10.34 18"/><path d="M7 6h1v4"/><path d="m16.71 13.88.7.71-2.82 2.82"/></svg>
<span id="t59" class="t " style="left:694.00px;top:799px;font-size:12.48px;line-height:14px;color:#64748b;letter-spacing:0.540px;">$0.002</span>
<div class="b" style="left:847px;top:85px;width:22px;height:22px;background:#efe2fd;border-radius:5px;"></div>
<svg class="ic" style="left:850.75px;top:88.75px;color:#491b7e" width="14.5" height="14.5" viewBox="0 0 24 24" fill="none" stroke="currentColor" stroke-width="2.2" stroke-linecap="round" stroke-linejoin="round"><rect width="18" height="18" x="3" y="3" rx="2"/><path d="M7 7h.01"/><path d="M17 7h.01"/><path d="M7 17h.01"/><path d="M17 17h.01"/></svg>
<span id="t60" class="t " style="left:878.00px;top:85px;font-size:18.72px;line-height:21px;-webkit-text-stroke:0.3px currentColor;color:#0f172a;letter-spacing:0.705px;">hybrid-tracing-agent</span>
<div class="b" style="left:1482px;top:80px;width:40px;height:32px;border:1px solid #e2e8f0;border-radius:6px;box-sizing:border-box;background:#fff;"></div>
<svg class="ic" style="left:1494.75px;top:88.35px;color:#373d4d" width="14.5" height="14.5" viewBox="0 0 24 24" fill="none" stroke="currentColor" stroke-width="2.2" stroke-linecap="round" stroke-linejoin="round"><ellipse cx="12" cy="5" rx="9" ry="3"/><path d="M3 5v14a9 3 0 0 0 9 3"/><path d="M3 12a9 3 0 0 0 9 3"/><path d="M21 5v6"/><path d="M18 15v6"/><path d="M15 18h6"/></svg>
<div class="b" style="left:1530px;top:80px;width:40px;height:32px;border:1px solid #e2e8f0;border-radius:6px;box-sizing:border-box;background:#fff;"></div>
<svg class="ic" style="left:1542.75px;top:88.35px;color:#373d4d" width="14.5" height="14.5" viewBox="0 0 24 24" fill="none" stroke="currentColor" stroke-width="2.2" stroke-linecap="round" stroke-linejoin="round"><path d="M21 15a2 2 0 0 1-2 2H7l-4 4V5a2 2 0 0 1 2-2h14a2 2 0 0 1 2 2z"/><path d="M8 10h.01"/><path d="M12 10h.01"/><path d="M16 10h.01"/></svg>
<div class="b" style="left:1578px;top:80px;width:40px;height:32px;border:1px solid #e2e8f0;border-radius:6px;box-sizing:border-box;background:#fff;"></div>
<svg class="ic" style="left:1590.75px;top:88.35px;color:#373d4d" width="14.5" height="14.5" viewBox="0 0 24 24" fill="none" stroke="currentColor" stroke-width="2.2" stroke-linecap="round" stroke-linejoin="round"><path d="M12 20h9"/><path d="M16.376 3.622a1 1 0 0 1 3.002 3.002L7.368 18.635a2 2 0 0 1-.855.506l-2.872.838a.5.5 0 0 1-.62-.62l.838-2.872a2 2 0 0 1 .506-.854z"/></svg>
<div class="b" style="left:1626px;top:80px;width:32px;height:32px;border:1px solid #e2e8f0;border-radius:6px;box-sizing:border-box;background:#fff;"></div>
<svg class="ic" style="left:1634.75px;top:88.35px;color:#373d4d" width="14.5" height="14.5" viewBox="0 0 24 24" fill="none" stroke="currentColor" stroke-width="2.2" stroke-linecap="round" stroke-linejoin="round"><circle cx="12" cy="12" r="1"/><circle cx="19" cy="12" r="1"/><circle cx="5" cy="12" r="1"/></svg>
<svg class="ic" style="left:851.5px;top:118.1px;color:#64748b" width="15" height="15" viewBox="0 0 24 24" fill="none" stroke="currentColor" stroke-width="1.9" stroke-linecap="round" stroke-linejoin="round"><circle cx="12" cy="12" r="10"/><polyline points="12 6 12 12 16 14"/></svg>
<span id="t61" class="t " style="left:876.00px;top:118px;font-size:14.56px;line-height:16px;color:#64748b;letter-spacing:-1.200px;">3.1s</span>
<svg class="ic" style="left:920.75px;top:118.35px;color:#64748b" width="14.5" height="14.5" viewBox="0 0 24 24" fill="none" stroke="currentColor" stroke-width="1.9" stroke-linecap="round" stroke-linejoin="round"><line x1="4" x2="20" y1="9" y2="9"/><line x1="4" x2="20" y1="15" y2="15"/><line x1="10" x2="8" y1="3" y2="21"/><line x1="16" x2="14" y1="3" y2="21"/></svg>
<span id="t62" class="t " style="left:944.00px;top:118px;font-size:14.56px;line-height:16px;color:#64748b;letter-spacing:0.290px;">1384 tokens</span>
<svg class="ic" style="left:1045.5px;top:118.1px;color:#64748b" width="15" height="15" viewBox="0 0 24 24" fill="none" stroke="currentColor" stroke-width="1.9" stroke-linecap="round" stroke-linejoin="round"><circle cx="8" cy="8" r="6"/><path d="M18.09 10.37A6 6 0 1 1 10.34 18"/><path d="M7 6h1v4"/><path d="m16.71 13.88.7.71-2.82 2.82"/></svg>
<span id="t63" class="t " style="left:1069.00px;top:118px;font-size:14.56px;line-height:16px;color:#64748b;letter-spacing:0.857px;">$0.00442</span>
<svg class="ic" style="left:851.5px;top:146.2px;color:#64748b" width="15" height="15" viewBox="0 0 24 24" fill="none" stroke="currentColor" stroke-width="1.9" stroke-linecap="round" stroke-linejoin="round"><path d="M12.586 2.586A2 2 0 0 0 11.172 2H4a2 2 0 0 0-2 2v7.172a2 2 0 0 0 .586 1.414l8.704 8.704a2.426 2.426 0 0 0 3.42 0l6.58-6.58a2.426 2.426 0 0 0 0-3.42z"/><circle cx="7.5" cy="7.5" r=".5" fill="currentColor"/></svg>
<div class="b" style="left:875px;top:140px;width:90px;height:28px;background:#dafbf0;border-radius:6px;"></div>
<span id="t64" class="t " style="left:887.00px;top:146px;font-size:14.56px;line-height:16px;color:#295747;letter-spacing:0.429px;">advanced</span>
<div class="b" style="left:969px;top:140px;width:88px;height:28px;background:#fde2f6;border-radius:6px;"></div>
<span id="t65" class="t " style="left:981.00px;top:146px;font-size:14.56px;line-height:16px;color:#72275f;letter-spacing:0.500px;">callbacks</span>
<div class="b" style="left:1061px;top:140px;width:97px;height:28px;background:#f1f5f9;border-radius:6px;"></div>
<span id="t66" class="t " style="left:1073.00px;top:146px;font-size:14.56px;line-height:16px;color:#64748b;letter-spacing:0.444px;">decorators</span>
<div class="b" style="left:1162px;top:140px;width:66px;height:28px;background:#dafbf0;border-radius:6px;"></div>
<span id="t67" class="t " style="left:1174.00px;top:146px;font-size:14.56px;line-height:16px;color:#295747;letter-spacing:0.600px;">hybrid</span>
<div class="b" style="left:1232px;top:140px;width:28px;height:28px;border:1px solid #e2e8f0;border-radius:6px;box-sizing:border-box;background:#fff;"></div>
<svg class="ic" style="left:1238.5px;top:146.2px;color:#373d4d" width="15" height="15" viewBox="0 0 24 24" fill="none" stroke="currentColor" stroke-width="2.1" stroke-linecap="round" stroke-linejoin="round"><path d="M5 12h14"/><path d="M12 5v14"/></svg>
<span id="t68" class="t " style="left:850.00px;top:202px;font-size:14.56px;line-height:16px;color:#5155f5;letter-spacing:0.455px;">Input/Output</span>
<span id="t69" class="t " style="left:968.00px;top:202px;font-size:14.56px;line-height:16px;color:#373d4d;letter-spacing:0.293px;">Feedback scores</span>
<svg class="ic" style="left:1087.25px;top:203.25px;color:#94a3b8" width="13.5" height="13.5" viewBox="0 0 24 24" fill="none" stroke="currentColor" stroke-width="1.7" stroke-linecap="round" stroke-linejoin="round"><circle cx="12" cy="12" r="10"/><path d="M12 16v-4"/><path d="M12 8h.01"/></svg>
<span id="t70" class="t " style="left:1132.00px;top:202px;font-size:14.56px;line-height:16px;color:#373d4d;letter-spacing:0.443px;">Metadata</span>
<div class="b" style="left:847px;top:230px;width:811px;height:1px;background:#e2e8f0;"></div>
<div class="b" style="left:851px;top:228px;width:85px;height:2px;background:#5155f5;"></div>
<span id="t71" class="t " style="left:859.00px;top:267px;font-size:14.56px;line-height:16px;color:#373d4d;letter-spacing:0.275px;">Input</span>
<svg class="ic" style="left:1630.2px;top:267.3px;color:#373d4d" width="16" height="16" viewBox="0 0 24 24" fill="none" stroke="currentColor" stroke-width="2.2" stroke-linecap="round" stroke-linejoin="round"><path d="m18 15-6-6-6 6"/></svg>
<div class="b" style="left:847px;top:303px;width:811px;height:84px;background:#f8fafc;border-radius:6px;"></div>
<div class="b" style="left:847px;top:342px;width:811px;height:1px;background:#e2e8f0;"></div>
<span id="t72" class="t " style="left:859.00px;top:315px;font-size:14.56px;line-height:16px;color:#373d4d;letter-spacing:0.100px;">Pretty</span>
<span id="t73" class="t emoji" style="left:903.30px;top:315px;font-size:14.04px;line-height:16px;color:#f5b301;">✨</span>
<svg class="ic" style="left:928.2px;top:315.3px;color:#8490a3" width="16" height="16" viewBox="0 0 24 24" fill="none" stroke="currentColor" stroke-width="1.9" stroke-linecap="round" stroke-linejoin="round"><path d="m6 9 6 6 6-6"/></svg>
<svg class="ic" style="left:1626.85px;top:315.55px;color:#373d4d" width="14.5" height="14.5" viewBox="0 0 24 24" fill="none" stroke="currentColor" stroke-width="2.2" stroke-linecap="round" stroke-linejoin="round"><rect width="14" height="14" x="8" y="8" rx="2" ry="2"/><path d="M4 16c-1.100 0-2-.9-2-2V4c0-1.100.9-2 2-2h10c1.100 0 2 .9 2 2"/></svg>
<span id="t74" class="t " style="left:859.00px;top:357px;font-size:14.56px;line-height:16px;color:#373d4d;letter-spacing:0.512px;">I need detailed weather and time information for Tokyo, including whether it&#x27;s business hours</span>
<div class="b" style="left:847px;top:403px;width:811px;height:1px;background:#e2e8f0;"></div>
<span id="t75" class="t " style="left:860.00px;top:424px;font-size:14.56px;line-height:16px;color:#373d4d;letter-spacing:0.120px;">Output</span>
<svg class="ic" style="left:1630.2px;top:424.3px;color:#373d4d" width="16" height="16" viewBox="0 0 24 24" fill="none" stroke="currentColor" stroke-width="2.2" stroke-linecap="round" stroke-linejoin="round"><path d="m18 15-6-6-6 6"/></svg>
<div class="b" style="left:847px;top:460px;width:811px;height:381px;background:#f8fafc;border-radius:6px;"></div>
<div class="b" style="left:847px;top:499px;width:811px;height:1px;background:#e2e8f0;"></div>
<span id="t76" class="t " style="left:860.00px;top:472px;font-size:14.56px;line-height:16px;color:#373d4d;letter-spacing:-0.300px;">YAML</span>
<svg class="ic" style="left:906px;top:472.2px;color:#8490a3" width="16" height="16" viewBox="0 0 24 24" fill="none" stroke="currentColor" stroke-width="1.9" stroke-linecap="round" stroke-linejoin="round"><path d="m6 9 6 6 6-6"/></svg>
<svg class="ic" style="left:1626.85px;top:472.55px;color:#373d4d" width="14.5" height="14.5" viewBox="0 0 24 24" fill="none" stroke="currentColor" stroke-width="2.2" stroke-linecap="round" stroke-linejoin="round"><rect width="14" height="14" x="8" y="8" rx="2" ry="2"/><path d="M4 16c-1.100 0-2-.9-2-2V4c0-1.100.9-2 2-2h10c1.100 0 2 .9 2 2"/></svg>
<div class="b" style="left:847px;top:857px;width:811px;height:1px;background:#e2e8f0;"></div>
<div id="code">
<div class="cl" style="top:505.0px"><span class="ln">1</span><span class="fold">⌄</span><span class="cc"><span style="color:#116cc4">content</span>:</span></div>
<div class="cl" style="top:524.6px"><span class="ln">2</span><span class="fold">⌄</span><span class="cc">  <span style="color:#116cc4">parts</span>:</span></div>
<div class="cl" style="top:544.2px"><span class="ln">3</span><span class="fold">⌄</span><span class="cc">    - <span style="color:#116cc4">text</span>: <span style="color:#116cc4">|-</span></span></div>
<div class="cl" style="top:563.8px"><span class="ln">4</span><span class="cc">        Here's the detailed information for Tokyo:</span></div>
<div class="cl" style="top:583.4px"><span class="ln">5</span><span class="cc"></span></div>
<div class="cl" style="top:603.0px"><span class="ln">6</span><span class="cc">        - **Weather**: It is partly cloudy with a temperature of 22°C (71.6°F). The humidity is at 70%,</span></div>
<div class="cl" style="top:622.6px"><span class="ln"></span><span class="cc">making it comfortably pleasant.</span></div>
<div class="cl" style="top:642.2px"><span class="ln">7</span><span class="cc"></span></div>
<div class="cl" style="top:661.8px"><span class="ln">8</span><span class="cc">        - **Time**: It is currently Monday, June 30, 2025, at 06:08 PM JST. This is outside business hours,</span></div>
<div class="cl" style="top:681.4px"><span class="ln"></span><span class="cc">even though it's a weekday.</span></div>
<div class="cl" style="top:701.0px"><span class="ln">9</span><span class="cc">  <span style="color:#116cc4">role</span>: model</span></div>
<div class="cl" style="top:720.6px"><span class="ln">10</span><span class="cc"><span style="color:#116cc4">partial</span>: false</span></div>
<div class="cl" style="top:740.2px"><span class="ln">11</span><span class="cc"><span style="color:#116cc4">custom_metadata</span>: <span style="color:#64748b">{}</span></span></div>
<div class="cl" style="top:759.8px"><span class="ln">12</span><span class="fold">⌄</span><span class="cc"><span style="color:#116cc4">usage_metadata</span>:</span></div>
<div class="cl" style="top:779.4px"><span class="ln">13</span><span class="cc">  <span style="color:#116cc4">candidates_token_count</span>: 80</span></div>
<div class="cl" style="top:799.0px"><span class="ln">14</span><span class="cc">  <span style="color:#116cc4">prompt_token_count</span>: 720</span></div>
<div class="cl" style="top:818.6px"><span class="ln">15</span><span class="cc">  <span style="color:#116cc4">total_token_count</span>: 800</span></div>
</div>
</body></html>
